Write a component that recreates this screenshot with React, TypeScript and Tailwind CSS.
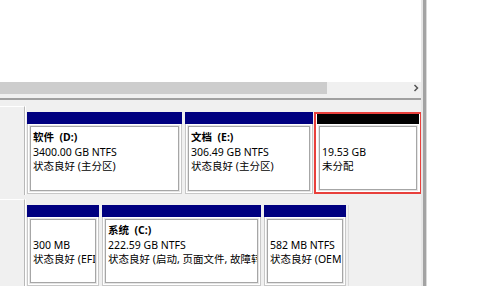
import React from 'react';

interface Part {
  w: string;
  gap: string;
  title?: string;
  size: string;
  status: string;
}

const row1: Part[] = [
  { w: 'w-[155px]', gap: 'ml-0', title: '软件  (D:)', size: '3400.00 GB NTFS', status: '状态良好 (主分区)' },
  { w: 'w-[128px]', gap: 'ml-[3px]', title: '文档  (E:)', size: '306.49 GB NTFS', status: '状态良好 (主分区)' },
];

// status lines are cut by the box edge in the original
const row2: Part[] = [
  { w: 'w-[72px]', gap: 'ml-0', size: '300 MB', status: '状态良好 (EFI' },
  { w: 'w-[159px]', gap: 'ml-[3px]', title: '系统  (C:)', size: '222.59 GB NTFS', status: '状态良好 (启动, 页面文件, 故障转' },
  { w: 'w-[82px]', gap: 'ml-[3px]', size: '582 MB NTFS', status: '状态良好 (OEM' },
];

function Lines({ p }: { p: { title?: string; size: string; status: string } }) {
  return (
    <>
      <div className="font-bold h-[14.5px] whitespace-pre">{p.title ?? '\u00a0'}</div>
      <div className="h-[14.5px]">{p.size}</div>
      <div className="h-[14.5px] overflow-hidden">{p.status}</div>
    </>
  );
}

function Cell({ p }: { p: Part }) {
  return (
    <div className={`${p.w} ${p.gap} shrink-0 flex flex-col bg-white border-x border-b border-[#c8c8c8]`}>
      <div className="h-[12px] bg-[#000080] -mx-[1px]" />
      <div className="flex-1 m-[2px] border border-[#a6a6a6] shadow-[0_0_0_1px_#e6e6e6] pl-[2px] pt-[3px] overflow-hidden whitespace-nowrap">
        <Lines p={p} />
      </div>
    </div>
  );
}

function Label() {
  return <div className="w-[25px] shrink-0 border-t border-t-white border-r border-r-[#b8b8b8] bg-[#f0f0f0]" />;
}

export default function App() {
  return (
    <div className="w-[484px] h-[286px] overflow-hidden bg-white flex text-[10.5px] leading-[14.5px] text-black font-['Noto_Sans','Noto_Sans_CJK_SC',sans-serif]">
      <div className="w-[421px] shrink-0 flex flex-col">
        {/* top list pane */}
        <div className="h-[82px] bg-white" />
        <div className="h-[12px] bg-[#f0f0f0] flex items-center">
          <div className="w-[327px] h-full bg-[#cdcdcd]" />
          <div className="flex-1" />
          <svg width="6" height="8" viewBox="0 0 6 8" className="mr-[2px]">
            <path d="M1.5 1 L4.5 4 L1.5 7" fill="none" stroke="#555" strokeWidth="1.5" />
          </svg>
        </div>
        <div className="h-[4px] bg-[#f0f0f0]" />
        <div className="h-[2px] bg-[#a0a0a0]" />

        {/* graphical disk pane */}
        <div className="flex-1 bg-[#f0f0f0] flex flex-col">
          <div className="mt-[6px] h-[89px] flex">
            <Label />
            <div className="flex pt-[6px] pl-[1px] pb-[1px] border-l border-white">
              {row1.map(p => (
                <Cell key={p.size} p={p} />
              ))}
              <div className="w-[108px] ml-[1px] shrink-0 flex flex-col bg-white border-2 border-[#e8403c] px-[1px]">
                <div className="h-[10px] bg-black" />
                <div className="flex-1 m-[2px] border border-[#a6a6a6] shadow-[0_0_0_1px_#e6e6e6] pl-[2px] pt-[3px] overflow-hidden whitespace-nowrap">
                  <Lines p={{ size: '19.53 GB', status: '未分配' }} />
                </div>
              </div>
            </div>
          </div>

          <div className="mt-[4px] flex-1 flex">
            <Label />
            <div className="flex pt-[6px] pl-[1px] border-l border-white">
              {row2.map(p => (
                <Cell key={p.size} p={p} />
              ))}
              <div className="ml-[2px] w-[1px] bg-[#dcdcdc]" />
            </div>
          </div>
        </div>
      </div>

      {/* window edge */}
      <div className="w-[2px] bg-[#e6e6e6]" />
      <div className="w-[3px] bg-[#a3a3a3]" />
      <div className="w-[1px] bg-[#d9d9d9]" />
      <div className="flex-1 bg-white" />
    </div>
  );
}
